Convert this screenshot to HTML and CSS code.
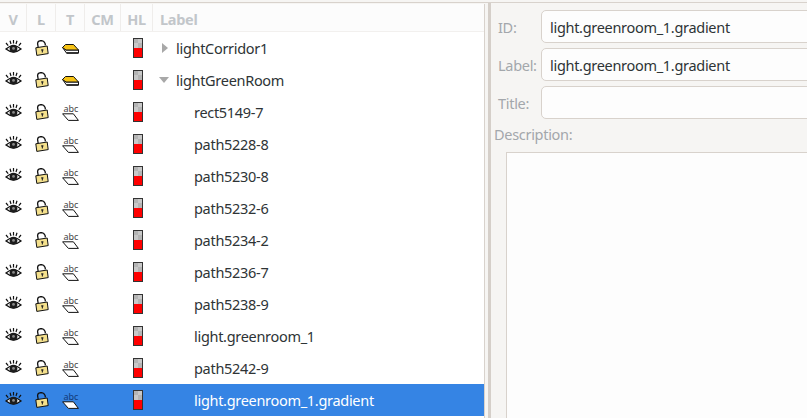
FILE: index.html
```html
<!DOCTYPE html>
<html lang="en">
<head>
    <meta charset="UTF-8">
    <title>Layers</title>
    <link rel="stylesheet" href="styles.css">
</head>
<body>
    <svg class="defs" width="0" height="0">
        <symbol id="eye" viewBox="0 0 17 14">
            <path d="M1 9 Q8.5 2.2 16 9 Q8.5 15 1 9Z" fill="#fff" stroke="#111" stroke-width="1.3"/>
            <circle cx="8.5" cy="8.6" r="3.9" fill="#1c1c1c"/>
            <circle cx="8.5" cy="8.4" r="1.4" fill="#8a8a8a"/>
            <path d="M3.2 5.6 1 3M6 4 5 .8M8.5 3.6V0M11 4 12 .8M13.8 5.6 16 3" stroke="#111" stroke-width="1.2" fill="none"/>
        </symbol>
        <symbol id="lock" viewBox="0 0 14 16">
            <path d="M3.2 7.5 2.6 3.6Q2.6 .8 6 .6Q9 .6 10 3.2L10.4 5.4" fill="none" stroke="#111" stroke-width="1.3"/>
            <path d="M.8 7.8 12.2 6 13.2 13.6 1.8 15.4Z" fill="#f4e08c" stroke="#111" stroke-width="1"/>
            <path d="M6.2 9.2H8.4V10.6L7.9 10.8V12.6H6.8V10.8L6.2 10.6Z" fill="#222"/>
        </symbol>
        <symbol id="group" viewBox="0 0 17 10">
            <path d="M.5 3.5 4.5 9H16.5V6H4Z" fill="#fff" stroke="#111" stroke-width="1"/>
            <path d="M4.5 9H16.5" stroke="#111" stroke-width="1.4"/>
            <path d="M.5 3.5 3.5 .5H11.5L16.5 6H4Z" fill="#f6c214" stroke="#111" stroke-width="1"/>
        </symbol>
        <symbol id="slab" viewBox="0 0 17 8">
            <path d="M.6 .8H11.4L16.4 7.4H6.4Z" fill="#fff" stroke="#111" stroke-width="1"/>
        </symbol>
        <symbol id="hl" viewBox="0 0 10 20">
            <rect width="10" height="10" fill="#b4b4b4"/>
            <rect x="5" width="5" height="5" fill="#c8c8c8"/>
            <rect y="5" width="5" height="5" fill="#c8c8c8"/>
            <rect y="10" width="10" height="10" fill="#f00"/>
            <rect x=".5" y=".5" width="9" height="19" fill="none" stroke="#333"/>
        </symbol>
    </svg>

    <div class="top-line"></div>
    <div class="main">
        <div class="tree-panel">
            <div class="row head">
                <div class="cell">V</div>
                <div class="cell">L</div>
                <div class="cell">T</div>
                <div class="cell">CM</div>
                <div class="cell">HL</div>
                <div class="cell">Label</div>
            </div>

            <div class="row">
                <div class="cell"><svg class="ic-eye"><use href="#eye"/></svg></div>
                <div class="cell"><svg class="ic-lock"><use href="#lock"/></svg></div>
                <div class="cell"><svg class="ic-group"><use href="#group"/></svg></div>
                <div class="cell"></div>
                <div class="cell"><svg class="ic-hl"><use href="#hl"/></svg></div>
                <div class="cell name"><span class="arrow-right"></span>lightCorridor1</div>
            </div>
            <div class="row">
                <div class="cell"><svg class="ic-eye"><use href="#eye"/></svg></div>
                <div class="cell"><svg class="ic-lock"><use href="#lock"/></svg></div>
                <div class="cell"><svg class="ic-group"><use href="#group"/></svg></div>
                <div class="cell"></div>
                <div class="cell"><svg class="ic-hl"><use href="#hl"/></svg></div>
                <div class="cell name"><span class="arrow-down"></span>lightGreenRoom</div>
            </div>
            <div class="row">
                <div class="cell"><svg class="ic-eye"><use href="#eye"/></svg></div>
                <div class="cell"><svg class="ic-lock"><use href="#lock"/></svg></div>
                <div class="cell"><svg class="ic-abc" viewBox="0 0 17 20"><text class="abc-text" x="1.5" y="10">abc</text><use href="#slab" y="11" width="17" height="8"/></svg></div>
                <div class="cell"></div>
                <div class="cell"><svg class="ic-hl"><use href="#hl"/></svg></div>
                <div class="cell name child">rect5149-7</div>
            </div>
            <div class="row">
                <div class="cell"><svg class="ic-eye"><use href="#eye"/></svg></div>
                <div class="cell"><svg class="ic-lock"><use href="#lock"/></svg></div>
                <div class="cell"><svg class="ic-abc" viewBox="0 0 17 20"><text class="abc-text" x="1.5" y="10">abc</text><use href="#slab" y="11" width="17" height="8"/></svg></div>
                <div class="cell"></div>
                <div class="cell"><svg class="ic-hl"><use href="#hl"/></svg></div>
                <div class="cell name child">path5228-8</div>
            </div>
            <div class="row">
                <div class="cell"><svg class="ic-eye"><use href="#eye"/></svg></div>
                <div class="cell"><svg class="ic-lock"><use href="#lock"/></svg></div>
                <div class="cell"><svg class="ic-abc" viewBox="0 0 17 20"><text class="abc-text" x="1.5" y="10">abc</text><use href="#slab" y="11" width="17" height="8"/></svg></div>
                <div class="cell"></div>
                <div class="cell"><svg class="ic-hl"><use href="#hl"/></svg></div>
                <div class="cell name child">path5230-8</div>
            </div>
            <div class="row">
                <div class="cell"><svg class="ic-eye"><use href="#eye"/></svg></div>
                <div class="cell"><svg class="ic-lock"><use href="#lock"/></svg></div>
                <div class="cell"><svg class="ic-abc" viewBox="0 0 17 20"><text class="abc-text" x="1.5" y="10">abc</text><use href="#slab" y="11" width="17" height="8"/></svg></div>
                <div class="cell"></div>
                <div class="cell"><svg class="ic-hl"><use href="#hl"/></svg></div>
                <div class="cell name child">path5232-6</div>
            </div>
            <div class="row">
                <div class="cell"><svg class="ic-eye"><use href="#eye"/></svg></div>
                <div class="cell"><svg class="ic-lock"><use href="#lock"/></svg></div>
                <div class="cell"><svg class="ic-abc" viewBox="0 0 17 20"><text class="abc-text" x="1.5" y="10">abc</text><use href="#slab" y="11" width="17" height="8"/></svg></div>
                <div class="cell"></div>
                <div class="cell"><svg class="ic-hl"><use href="#hl"/></svg></div>
                <div class="cell name child">path5234-2</div>
            </div>
            <div class="row">
                <div class="cell"><svg class="ic-eye"><use href="#eye"/></svg></div>
                <div class="cell"><svg class="ic-lock"><use href="#lock"/></svg></div>
                <div class="cell"><svg class="ic-abc" viewBox="0 0 17 20"><text class="abc-text" x="1.5" y="10">abc</text><use href="#slab" y="11" width="17" height="8"/></svg></div>
                <div class="cell"></div>
                <div class="cell"><svg class="ic-hl"><use href="#hl"/></svg></div>
                <div class="cell name child">path5236-7</div>
            </div>
            <div class="row">
                <div class="cell"><svg class="ic-eye"><use href="#eye"/></svg></div>
                <div class="cell"><svg class="ic-lock"><use href="#lock"/></svg></div>
                <div class="cell"><svg class="ic-abc" viewBox="0 0 17 20"><text class="abc-text" x="1.5" y="10">abc</text><use href="#slab" y="11" width="17" height="8"/></svg></div>
                <div class="cell"></div>
                <div class="cell"><svg class="ic-hl"><use href="#hl"/></svg></div>
                <div class="cell name child">path5238-9</div>
            </div>
            <div class="row">
                <div class="cell"><svg class="ic-eye"><use href="#eye"/></svg></div>
                <div class="cell"><svg class="ic-lock"><use href="#lock"/></svg></div>
                <div class="cell"><svg class="ic-abc" viewBox="0 0 17 20"><text class="abc-text" x="1.5" y="10">abc</text><use href="#slab" y="11" width="17" height="8"/></svg></div>
                <div class="cell"></div>
                <div class="cell"><svg class="ic-hl"><use href="#hl"/></svg></div>
                <div class="cell name child">light.greenroom_1</div>
            </div>
            <div class="row">
                <div class="cell"><svg class="ic-eye"><use href="#eye"/></svg></div>
                <div class="cell"><svg class="ic-lock"><use href="#lock"/></svg></div>
                <div class="cell"><svg class="ic-abc" viewBox="0 0 17 20"><text class="abc-text" x="1.5" y="10">abc</text><use href="#slab" y="11" width="17" height="8"/></svg></div>
                <div class="cell"></div>
                <div class="cell"><svg class="ic-hl"><use href="#hl"/></svg></div>
                <div class="cell name child">path5242-9</div>
            </div>
            <div class="row selected">
                <div class="cell"><svg class="ic-eye"><use href="#eye"/></svg></div>
                <div class="cell"><svg class="ic-lock"><use href="#lock"/></svg></div>
                <div class="cell"><svg class="ic-abc" viewBox="0 0 17 20"><text class="abc-text" x="1.5" y="10">abc</text><use href="#slab" y="11" width="17" height="8"/></svg></div>
                <div class="cell"></div>
                <div class="cell"><svg class="ic-hl"><use href="#hl"/></svg></div>
                <div class="cell name child">light.greenroom_1.gradient</div>
            </div>
        </div>

        <div class="splitter"></div>

        <div class="props">
            <div class="field">
                <label for="objId">ID:</label>
                <input type="text" id="objId" value="light.greenroom_1.gradient">
            </div>
            <div class="field">
                <label for="objLabel">Label:</label>
                <input type="text" id="objLabel" value="light.greenroom_1.gradient">
            </div>
            <div class="field">
                <label for="objTitle">Title:</label>
                <input type="text" id="objTitle">
            </div>
            <label class="desc-label" for="objDesc">Description:</label>
            <textarea id="objDesc"></textarea>
        </div>
    </div>
</body>
</html>
```

FILE: styles.css
```css
html, body {
    margin: 0;
    height: 418px;
    overflow: hidden;
}
body {
    background-color: #f6f5f3;
    font-family: "Noto Sans", sans-serif;
    font-size: 14.5px;
    letter-spacing: -0.3px;
    color: #2e3436;
}
.defs {
    display: block;
    height: 0;
}
.top-line {
    height: 1px;
    margin-top: 2px;
    margin-bottom: 1px;
    background-color: #d8d2cc;
}
.main {
    display: flex;
    height: 414px;
}
.tree-panel {
    width: 484px;
    border-right: 1px solid #d8d2cc;
    background-color: #fff;
    overflow: hidden;
}
.row {
    display: grid;
    grid-template-columns: 27px 29px 29px 36px 32px 1fr;
    height: 32px;
    align-items: center;
}
.cell {
    display: flex;
    justify-content: center;
    align-items: center;
}
.row.head {
    height: 28px;
    background-color: #fcfcfc;
    border-bottom: 1px solid #f2f0ee;
    box-sizing: border-box;
    font-weight: 700;
    font-size: 14.5px;
    color: #c2c6ca;
}
.head .cell {
    display: block;
    height: 27px;
    line-height: 31px;
    text-align: center;
    border-right: 1px solid #efedeb;
    box-sizing: border-box;
}
.head .cell:last-child {
    border-right: 0;
    text-align: left;
    padding-left: 7px;
}
.name {
    justify-content: flex-start;
    position: relative;
    padding-left: 23px;
    padding-bottom: 1px;
    white-space: nowrap;
}
.name.child {
    padding-left: 41px;
}
.selected {
    background-color: #3584e4;
}
.selected .name {
    color: #fff;
}
.arrow-right {
    position: absolute;
    left: 9px;
    top: 50%;
    margin-top: -5px;
    border-left: 6px solid #a8a8a8;
    border-top: 5px solid transparent;
    border-bottom: 5px solid transparent;
}
.arrow-down {
    position: absolute;
    left: 6px;
    top: 50%;
    margin-top: -3px;
    border-top: 6px solid #a8a8a8;
    border-left: 5.5px solid transparent;
    border-right: 5.5px solid transparent;
}
.ic-eye {
    width: 17px;
    height: 14px;
    margin-left: -1px;
    margin-top: -2px;
}
.ic-lock {
    width: 14px;
    height: 16px;
    margin-left: 1px;
    margin-top: -1px;
}
.ic-group {
    width: 17px;
    height: 10px;
    margin-top: 2px;
}
.ic-abc {
    width: 17px;
    height: 20px;
}
.abc-text {
    font-family: "Noto Sans", sans-serif;
    font-size: 9px;
    letter-spacing: 0;
    fill: #444;
}
.selected .abc-text {
    fill: #123a78;
}
.ic-hl {
    width: 10px;
    height: 20px;
    margin-top: -1px;
    margin-left: 1px;
}
.splitter {
    width: 3px;
    margin-left: 3px;
    margin-top: -1px;
    background-color: #d5cfc9;
}
.props {
    flex: 1;
    padding-top: 6px;
    padding-left: 3px;
    min-width: 0;
    overflow: hidden;
}
.field {
    display: flex;
    align-items: center;
    height: 33px;
    margin-bottom: 5px;
    padding-left: 4px;
}
label {
    color: #a3a7ab;
}
.field label {
    width: 43px;
    flex: none;
}
input[type="text"] {
    flex: 1;
    min-width: 0;
    height: 33px;
    box-sizing: border-box;
    padding: 0 8px;
    margin-right: -8px;
    border: 1px solid #d8d2cc;
    border-radius: 5px;
    background-color: #fdfdfd;
    font: inherit;
    letter-spacing: inherit;
    color: #2e3436;
}
.desc-label {
    display: block;
    height: 24px;
    line-height: 24px;
    margin-top: -2px;
}
textarea {
    display: block;
    box-sizing: border-box;
    width: 320px;
    height: 280px;
    margin-left: 12px;
    margin-top: 6px;
    border: 1px solid #d8d2cc;
    background-color: #fdfdfd;
    resize: none;
}
```
